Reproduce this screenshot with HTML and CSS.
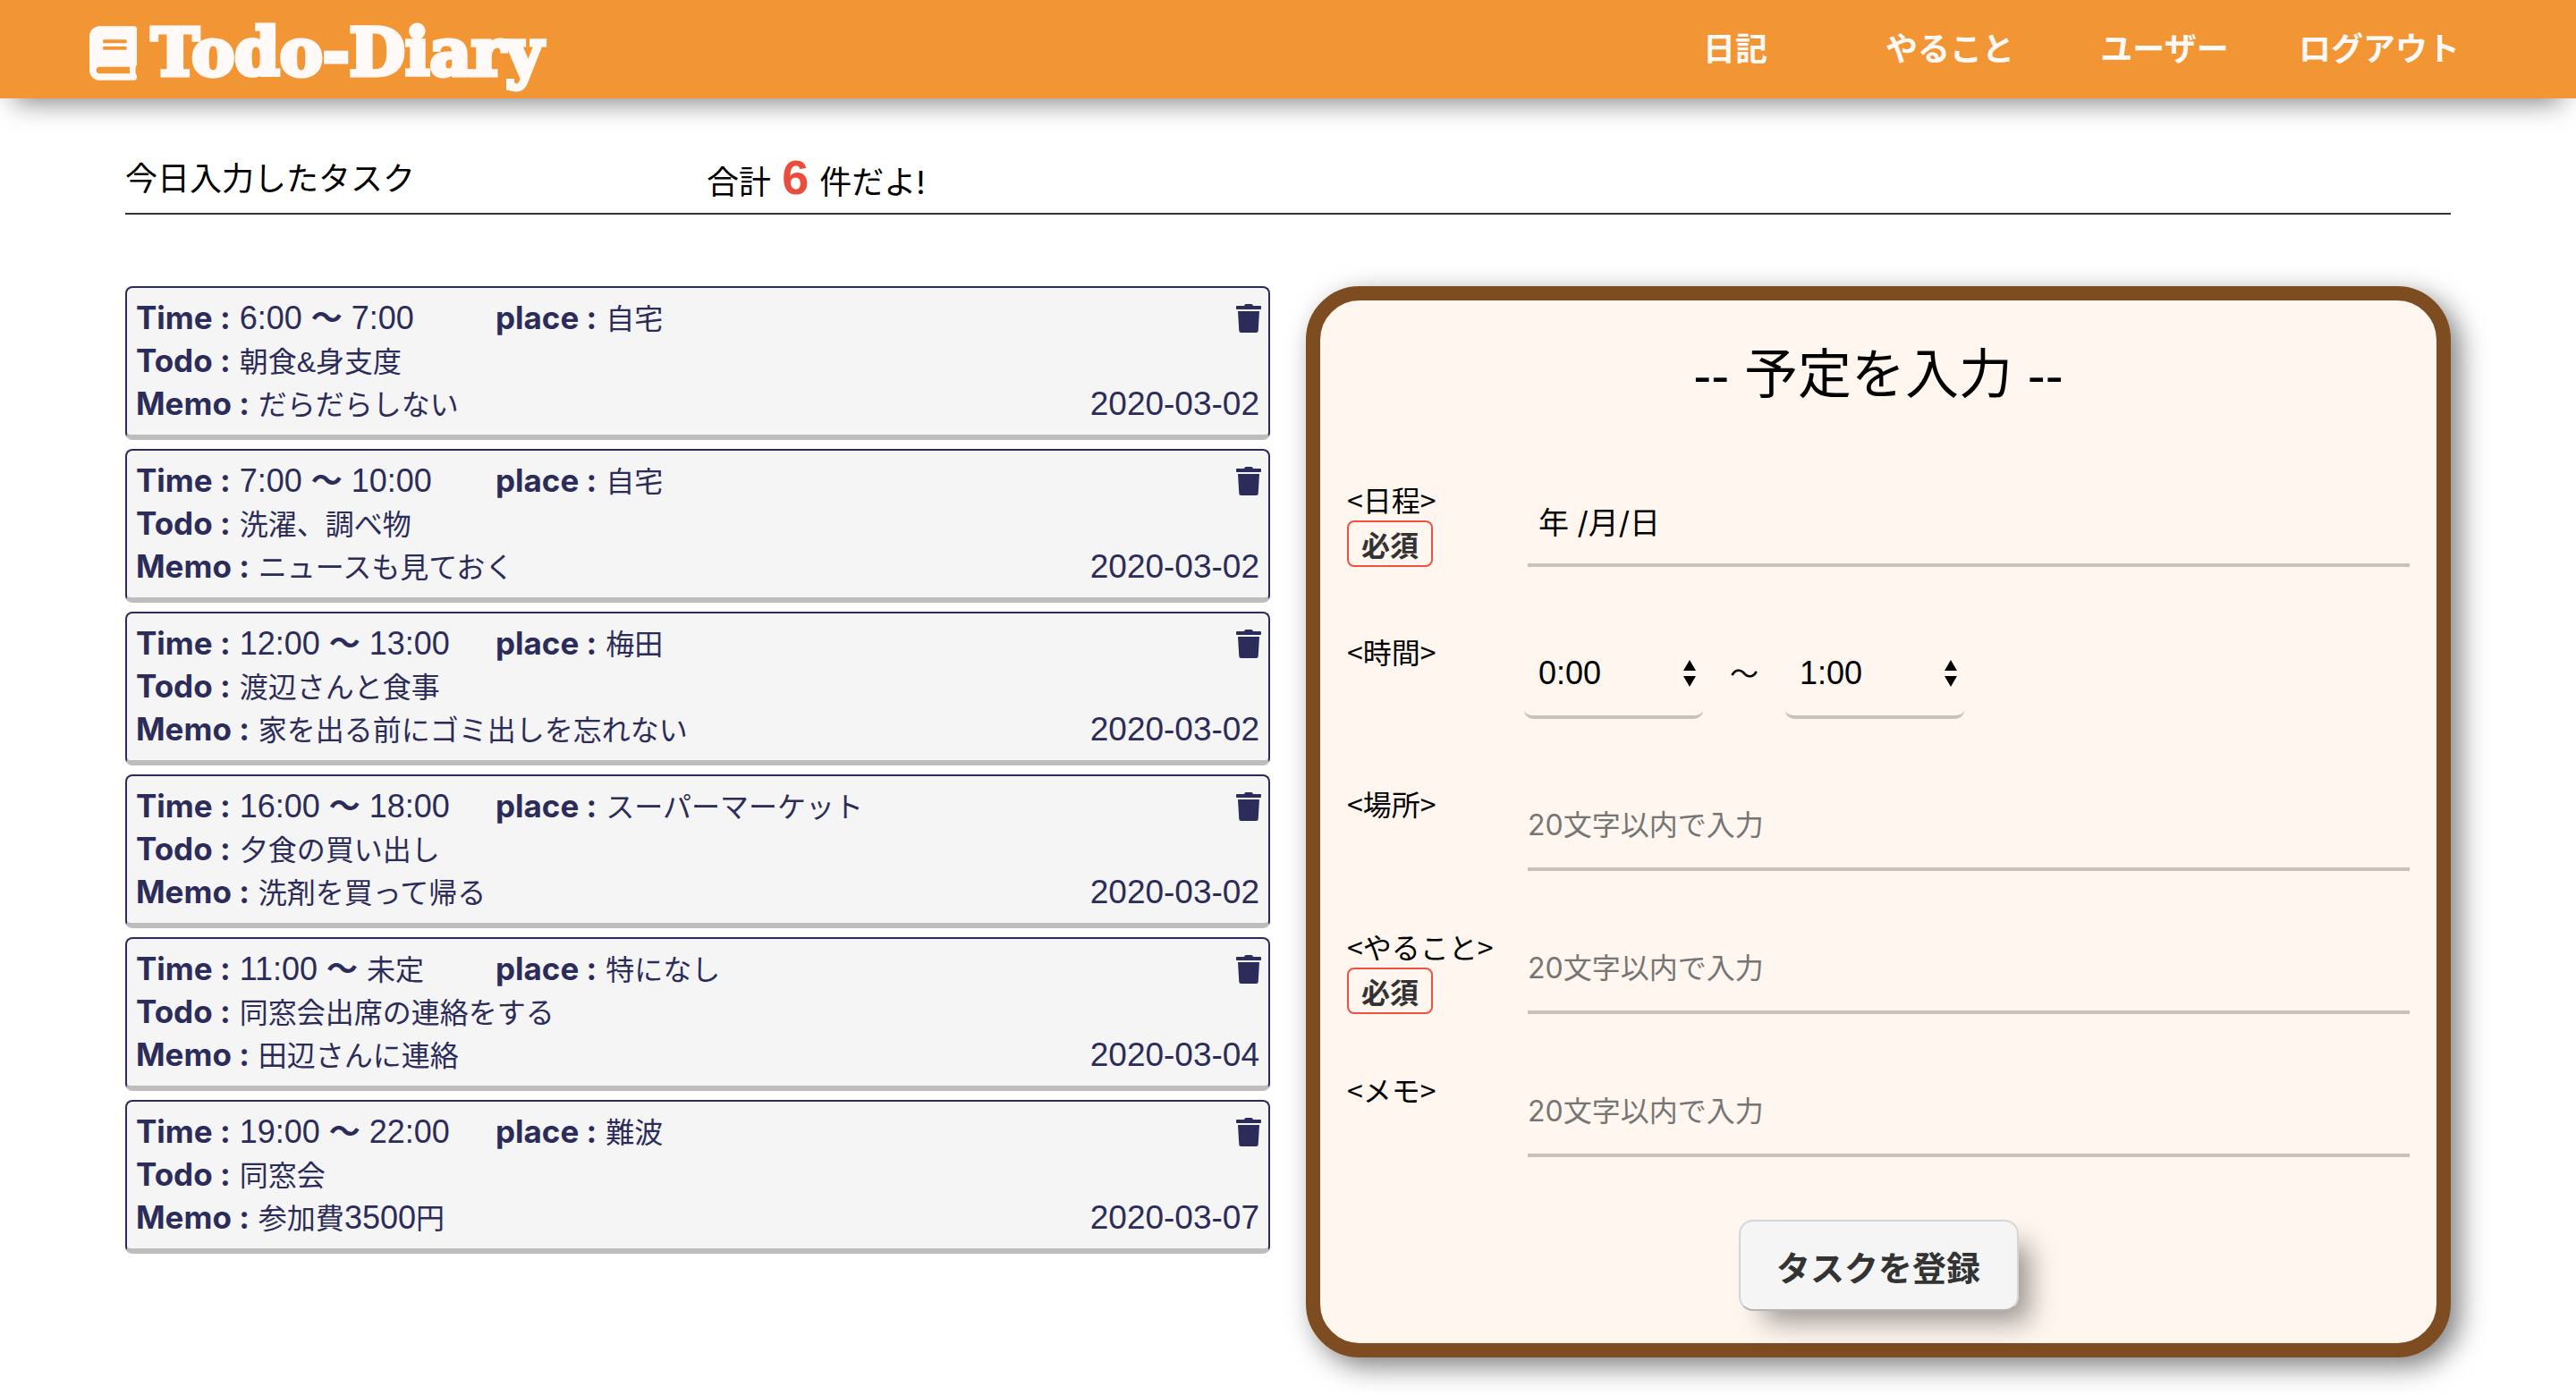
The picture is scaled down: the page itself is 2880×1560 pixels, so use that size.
FILE: index.html
```html
<!DOCTYPE html>
<html lang="ja">
<head>
<meta charset="utf-8">
<title>Todo-Diary</title>
<link rel="stylesheet" href="styles.css">
</head>
<body>
<svg class="sprite" aria-hidden="true">
  <symbol id="trash" viewBox="0 0 28 32">
    <path d="M1 2H9Q9.500 0 11 0H17Q18.500 0 19 2H27Q28 2 28 3V5Q28 6 27 6H1Q0 6 0 5V3Q0 2 1 2ZM2 8H26L24.700 30Q24.500 32 22.500 32H5.500Q3.500 32 3.300 30Z"/>
  </symbol>
</svg>
<header class="header">
  <a class="logo" href="#">
    <svg class="logo-icon" viewBox="0 0 448 512" aria-hidden="true"><path d="M448 360V24c0-13.300-10.700-24-24-24H96C43 0 0 43 0 96v320c0 53 43 96 96 96h328c13.300 0 24-10.700 24-24v-16c0-7.500-3.500-14.300-8.900-18.700-4.200-15.400-4.200-59.300 0-74.700 5.400-4.300 8.900-11.100 8.900-18.600zM128 134c0-3.300 2.700-6 6-6h212c3.300 0 6 2.700 6 6v20c0 3.300-2.700 6-6 6H134c-3.300 0-6-2.700-6-6v-20zm0 64c0-3.300 2.700-6 6-6h212c3.300 0 6 2.700 6 6v20c0 3.300-2.700 6-6 6H134c-3.300 0-6-2.700-6-6v-20zm253.400 250H96c-17.700 0-32-14.300-32-32 0-17.600 14.400-32 32-32h285.400c-1.900 17.100-1.900 46.900 0 64z"/></svg>
    <span>Todo-Diary</span>
  </a>
  <nav>
    <ul class="nav">
      <li><a href="#">日記</a></li>
      <li><a href="#">やること</a></li>
      <li><a href="#">ユーザー</a></li>
      <li><a href="#">ログアウト</a></li>
    </ul>
  </nav>
</header>
<main class="main">
  <div class="summary">
    <p>今日入力したタスク</p>
    <p>合計 <strong class="count">6</strong> 件だよ!</p>
  </div>
  <div class="columns">
    <ul class="tasks">
      <li class="task">
        <div class="row"><p class="time"><b>Time :</b> 6:00 <b>〜</b> 7:00</p><p class="place"><b>place :</b> <span class="jp">自宅</span></p><button class="delete" type="button" aria-label="削除"><svg><use href="#trash"/></svg></button></div>
        <p><b>Todo :</b> <span class="jp">朝食&amp;身支度</span></p>
        <div class="row"><p><b>Memo :</b> <span class="jp">だらだらしない</span></p><time>2020-03-02</time></div>
      </li>
      <li class="task">
        <div class="row"><p class="time"><b>Time :</b> 7:00 <b>〜</b> 10:00</p><p class="place"><b>place :</b> <span class="jp">自宅</span></p><button class="delete" type="button" aria-label="削除"><svg><use href="#trash"/></svg></button></div>
        <p><b>Todo :</b> <span class="jp">洗濯、調べ物</span></p>
        <div class="row"><p><b>Memo :</b> <span class="jp">ニュースも見ておく</span></p><time>2020-03-02</time></div>
      </li>
      <li class="task">
        <div class="row"><p class="time"><b>Time :</b> 12:00 <b>〜</b> 13:00</p><p class="place"><b>place :</b> <span class="jp">梅田</span></p><button class="delete" type="button" aria-label="削除"><svg><use href="#trash"/></svg></button></div>
        <p><b>Todo :</b> <span class="jp">渡辺さんと食事</span></p>
        <div class="row"><p><b>Memo :</b> <span class="jp">家を出る前にゴミ出しを忘れない</span></p><time>2020-03-02</time></div>
      </li>
      <li class="task">
        <div class="row"><p class="time"><b>Time :</b> 16:00 <b>〜</b> 18:00</p><p class="place"><b>place :</b> <span class="jp">スーパーマーケット</span></p><button class="delete" type="button" aria-label="削除"><svg><use href="#trash"/></svg></button></div>
        <p><b>Todo :</b> <span class="jp">夕食の買い出し</span></p>
        <div class="row"><p><b>Memo :</b> <span class="jp">洗剤を買って帰る</span></p><time>2020-03-02</time></div>
      </li>
      <li class="task">
        <div class="row"><p class="time"><b>Time :</b> 11:00 <b>〜</b> <span class="jp">未定</span></p><p class="place"><b>place :</b> <span class="jp">特になし</span></p><button class="delete" type="button" aria-label="削除"><svg><use href="#trash"/></svg></button></div>
        <p><b>Todo :</b> <span class="jp">同窓会出席の連絡をする</span></p>
        <div class="row"><p><b>Memo :</b> <span class="jp">田辺さんに連絡</span></p><time>2020-03-04</time></div>
      </li>
      <li class="task">
        <div class="row"><p class="time"><b>Time :</b> 19:00 <b>〜</b> 22:00</p><p class="place"><b>place :</b> <span class="jp">難波</span></p><button class="delete" type="button" aria-label="削除"><svg><use href="#trash"/></svg></button></div>
        <p><b>Todo :</b> <span class="jp">同窓会</span></p>
        <div class="row"><p><b>Memo :</b> <span class="jp">参加費</span>3500<span class="jp">円</span></p><time>2020-03-07</time></div>
      </li>
    </ul>
    <form class="form">
      <h1>-- 予定を入力 --</h1>
      <div class="field tall">
        <label for="date">&lt;日程&gt;<span class="required">必須</span></label>
        <input class="date" id="date" type="text" value="年 /月/日">
      </div>
      <div class="field tall">
        <label for="start">&lt;時間&gt;</label>
        <div class="range">
          <span class="select"><select id="start"><option>0:00</option></select><svg viewBox="0 0 14 30" aria-hidden="true"><path d="M7 0 14 12H0ZM7 30 0 18H14Z"/></svg></span>
          <span>〜</span>
          <span class="select"><select id="end" aria-label="終了時間"><option>1:00</option></select><svg viewBox="0 0 14 30" aria-hidden="true"><path d="M7 0 14 12H0ZM7 30 0 18H14Z"/></svg></span>
        </div>
      </div>
      <div class="field">
        <label for="where">&lt;場所&gt;</label>
        <input id="where" type="text" placeholder="20文字以内で入力">
      </div>
      <div class="field">
        <label for="todo">&lt;やること&gt;<span class="required">必須</span></label>
        <input id="todo" type="text" placeholder="20文字以内で入力">
      </div>
      <div class="field">
        <label for="memo">&lt;メモ&gt;</label>
        <input id="memo" type="text" placeholder="20文字以内で入力">
      </div>
      <button class="submit" type="submit">タスクを登録</button>
    </form>
  </div>
</main>
</body>
</html>
```
FILE: styles.css
```css
* {
  box-sizing: border-box;
  margin: 0;
  padding: 0;
}

body {
  background: #fff;
  color: #000;
  font-family: Inter, "Noto Sans CJK JP", sans-serif;
  font-size: 32px;
  line-height: 48px;
}

ul {
  list-style: none;
}

a {
  color: inherit;
  text-decoration: none;
}

.sprite {
  display: none;
}

.header {
  display: flex;
  justify-content: space-between;
  align-items: center;
  height: 110px;
  padding: 0 100px;
  background: #f29535;
  color: #fff9f7;
  box-shadow: 0 20px 30px -16px rgba(0, 0, 0, 0.5);
}

.logo {
  display: flex;
  align-items: center;
  gap: 16px;
  padding-top: 8px;
  font-family: "DejaVu Serif", serif;
  font-size: 72px;
  font-weight: bold;
  line-height: 80px;
  -webkit-text-stroke: 5px #fff9f7;
}

.logo-icon {
  width: 53px;
  height: 61px;
  fill: currentColor;
  stroke: none;
}

.nav {
  display: flex;
  font-size: 36px;
  font-weight: bold;
}

.nav li {
  width: 240px;
  text-align: center;
}

.main {
  padding: 64px 140px 40px;
}

.summary {
  display: grid;
  grid-template-columns: 1fr 3fr;
  height: 66px;
  border-bottom: 2px solid #333;
  font-size: 36px;
  line-height: 52px;
}

.count {
  margin: 0 2px;
  color: #eb4d3d;
  font-family: "Liberation Sans", sans-serif;
  font-size: 54px;
  line-height: 48px;
}

.columns {
  display: grid;
  grid-template-columns: 1fr 1fr;
  gap: 40px;
  align-items: start;
  margin-top: 80px;
}

.tasks {
  display: grid;
  gap: 10px;
}

.task {
  padding: 10px 8px 10px 10px;
  border: 2px solid #2c2c5a;
  border-bottom: 6px solid #bdbdbd;
  border-radius: 8px;
  background: #f5f5f5;
  color: #2c2c5a;
  font-family: "Liberation Sans", "Noto Sans CJK JP", sans-serif;
  font-size: 36px;
}

.task b {
  font-family: Inter, "Noto Sans CJK JP", sans-serif;
  font-size: 35px;
  line-height: 1;
}

.task time {
  padding-right: 2px;
  font-size: 37px;
}

.jp {
  font-size: 32px;
  line-height: 1;
}

.row {
  display: flex;
  justify-content: space-between;
}

.time {
  width: 402px;
}

.place {
  flex: 1;
}

.delete {
  width: 28px;
  border: 0;
  background: none;
  color: inherit;
}

.delete svg {
  display: block;
  width: 28px;
  height: 32px;
  fill: currentColor;
}

.form {
  display: flex;
  flex-direction: column;
  padding: 38px 30px 36px;
  border: 16px solid #7e4c21;
  border-radius: 60px;
  background: #fff6ef;
  box-shadow: 10px 10px 30px rgba(0, 0, 0, 0.5);
}

h1 {
  margin-bottom: 68px;
  font-family: "Liberation Sans", "Noto Sans CJK JP", sans-serif;
  font-size: 60px;
  font-weight: normal;
  line-height: 92px;
  text-align: center;
}

.field {
  display: grid;
  grid-template-columns: 17% 1fr;
  align-items: start;
  height: 160px;
}

.tall {
  height: 170px;
}

label {
  font-family: "Noto Sans CJK JP", sans-serif;
  line-height: 48px;
  white-space: nowrap;
}

.required {
  display: block;
  width: 96px;
  border: 2px solid #f05040;
  border-radius: 8px;
  color: #333;
  font-weight: bold;
  text-align: center;
}

input {
  width: 100%;
  height: 100px;
  border: 0;
  border-bottom: 4px solid #c8c2ba;
  background: transparent;
  font: inherit;
}

input::placeholder {
  color: #757575;
}

.date {
  padding-left: 12px;
  font-size: 34px;
}

.range {
  display: flex;
  align-items: center;
  gap: 30px;
  margin: 0 -4px;
}

.select {
  position: relative;
  width: 200px;
}

select {
  appearance: none;
  width: 100%;
  height: 100px;
  padding-left: 16px;
  border: 0;
  border-bottom: 4px solid #c8c2ba;
  border-radius: 10px;
  background: transparent;
  color: #000;
  font-family: "Liberation Sans", sans-serif;
  font-size: 36px;
}

.select svg {
  position: absolute;
  top: 34px;
  right: 8px;
  width: 14px;
  height: 30px;
  pointer-events: none;
}

.submit {
  align-self: center;
  width: 313px;
  height: 102px;
  margin-top: 10px;
  border: 2px solid #d5d5d5;
  border-bottom-color: #b5b5b5;
  border-radius: 16px;
  background: #f5f5f5;
  box-shadow: 20px 20px 30px -8px rgba(0, 0, 0, 0.4);
  color: #333;
  font: bold 38px "Noto Sans CJK JP", sans-serif;
}
```
